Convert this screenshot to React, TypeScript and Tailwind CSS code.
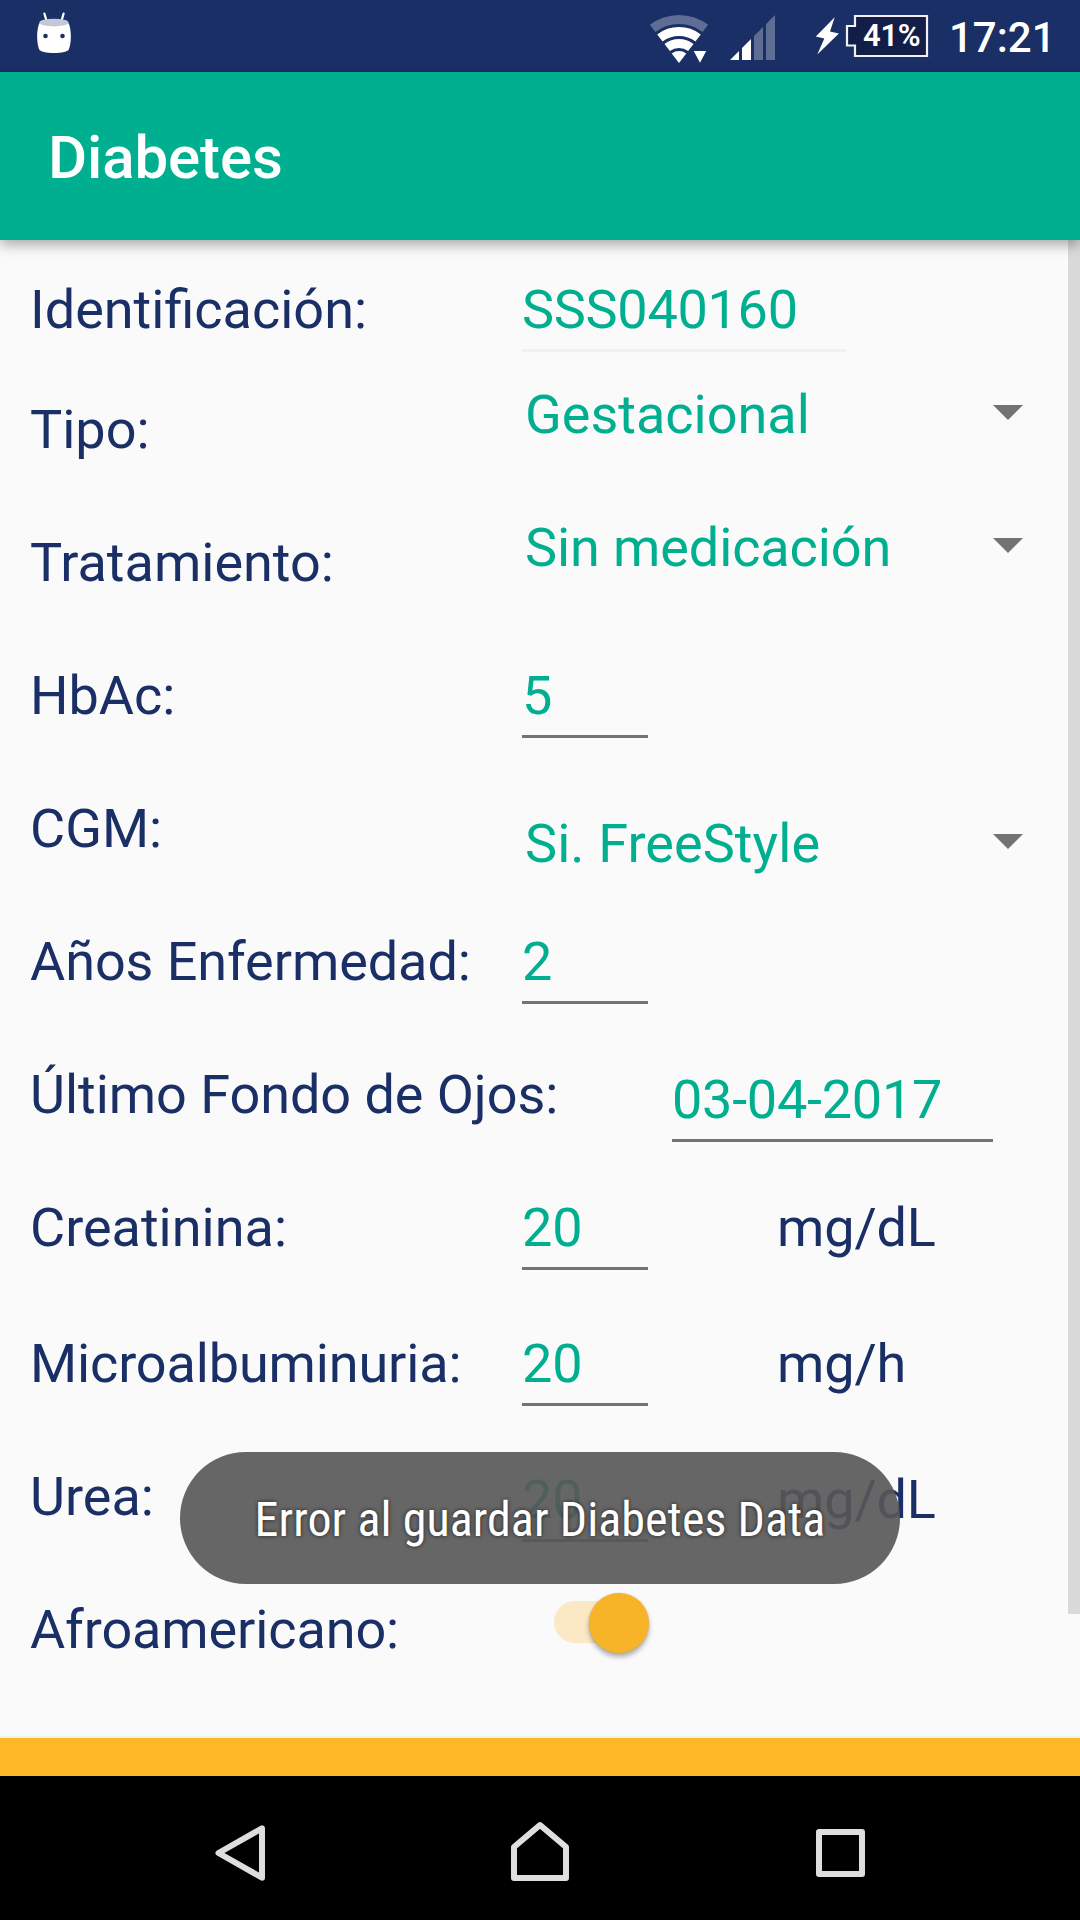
import React from "react";

type Row = {
  label: string;
  tracking?: string;
  height: string;
  control: React.ReactNode;
};

function Field({ value, className }: { value: string; className: string }) {
  return (
    <div className={`h-[74px] shrink-0 border-b-3 whitespace-nowrap text-[#00ae90] ${className}`}>
      {value}
    </div>
  );
}

function Spinner({ value, className }: { value: string; className: string }) {
  return (
    <div className={`ml-[3px] flex w-[498px] items-start justify-between text-[#00ae90] ${className}`}>
      <span className="whitespace-nowrap">{value}</span>
      <svg className="mt-[22px] h-[15px] w-[30px]" viewBox="0 0 30 15">
        <path d="M0 0H30L15 15Z" fill="#737373" />
      </svg>
    </div>
  );
}

function Measure({ unit, className }: { unit: string; className: string }) {
  return (
    <div className={`flex items-start ${className}`}>
      <Field value="20" className="w-[126px] border-[#737373]" />
      <span className="ml-[129px] tracking-[-0.15px] whitespace-nowrap text-[#1a2f66]">{unit}</span>
    </div>
  );
}

function Toggle() {
  return (
    <div className="relative mt-[3px] ml-8 h-[42px] w-[84px] rounded-full bg-[#fbe9c5]">
      <div className="absolute -top-[8px] left-[35px] h-[60px] w-[60px] rounded-full bg-[#f8b429] shadow-[0_4px_5px_rgba(0,0,0,0.3),0_0_2px_rgba(0,0,0,0.15)]" />
    </div>
  );
}

const rows: Row[] = [
  { label: "Identificación:", height: "h-[120px]", control: <Field value="SSS040160" className="w-[324px] border-[#f0f0f0] tracking-[-0.28px]" /> },
  { label: "Tipo:", height: "h-[133px]", control: <Spinner value="Gestacional" className="-mt-[15px]" /> },
  { label: "Tratamiento:", height: "h-[133px]", control: <Spinner value="Sin medicación" className="-mt-[15px] tracking-[-0.1px]" /> },
  { label: "HbAc:", height: "h-[133px]", control: <Field value="5" className="w-[126px] border-[#737373]" /> },
  { label: "CGM:", height: "h-[133px]", control: <Spinner value="Si. FreeStyle" className="mt-[15px] tracking-[0.08px]" /> },
  { label: "Años Enfermedad:", tracking: "tracking-[-0.08px]", height: "h-[133px]", control: <Field value="2" className="w-[126px] border-[#737373]" /> },
  { label: "Último Fondo de Ojos:", tracking: "tracking-[-0.05px]", height: "h-[133px]", control: <Field value="03-04-2017" className="mt-[5px] ml-[150px] w-[321px] border-[#737373] tracking-[-0.25px]" /> },
  { label: "Creatinina:", height: "h-[136px]", control: <Measure unit="mg/dL" className="" /> },
  { label: "Microalbuminuria:", tracking: "tracking-[-0.13px]", height: "h-[133px]", control: <Measure unit="mg/h" className="" /> },
  { label: "Urea:", height: "h-[133px]", control: <Measure unit="mg/dL" className="mt-[3px]" /> },
  { label: "Afroamericano:", tracking: "tracking-[-0.12px]", height: "h-[133px]", control: <Toggle /> },
];

function StatusBar() {
  return (
    <div className="flex h-[72px] shrink-0 items-start bg-[#1a2f66] font-medium text-white">
      <svg className="mt-3 ml-9 h-[42px] w-9" viewBox="36 12 36 42">
        <path d="M44.4 13.6 46.6 21M63.6 13.6 61.5 21" stroke="#fff" strokeWidth="2.2" strokeLinecap="round" />
        <path d="M39 24C41 17.500 67 17.500 69 24C71.500 31 71.500 42 69 49C68 54.300 40 54.300 39 49C36.500 42 36.500 31 39 24Z" fill="#fff" />
        <ellipse cx="54" cy="22.600" rx="14.600" ry="3.900" fill="#c3c8d7" />
        <circle cx="45.500" cy="36" r="2.300" fill="#1a2f66" />
        <circle cx="62.500" cy="36" r="2.300" fill="#1a2f66" />
      </svg>
      <svg className="mt-3 ml-[576px] h-[54px] w-[62px]" viewBox="648 12 62 54">
        <path d="M649.9 24.800A48 48 0 0 1 708.1 24.800L702.600 32A39 39 0 0 0 655.400 32Z" fill="#5f6d94" />
        <g fill="#fff">
          <path d="M657.200 34.400A36 36 0 0 1 700.800 34.400L695.400 41.500A27 27 0 0 0 662.600 41.500Z" />
          <path d="M664.500 43.900A24 24 0 0 1 693.500 43.900L688.100 51.100A15 15 0 0 0 669.900 51.100Z" />
          <path d="M671.700 53.500A12 12 0 0 1 686.300 53.500L679 63Z" />
          <path d="M693.700 51H706.200L700 62.700Z" />
        </g>
      </svg>
      <svg className="mt-3 ml-[18px] h-[50px] w-12" viewBox="728 12 48 50">
        <path d="M730 60L739 51V60ZM742 60V48L751 39V60Z" fill="#fff" />
        <path d="M754 60V36L763 27V60ZM766 60V24L775 15V60Z" fill="#5f6d94" />
      </svg>
      <svg className="mt-4 ml-[38px] h-10 w-[26px]" viewBox="814 16 26 40">
        <path d="M834.700 17.300L815.800 36.600L824.300 38.500L817.300 54.500L838.900 33.500L830 31.600Z" fill="#fff" />
      </svg>
      <div className="relative mt-[14px] ml-[5px] h-11 w-[84px]">
        <svg className="h-11 w-[84px]" viewBox="845 14 84 44">
          <path d="M855 16H927V56H855V45.500H847V26H855Z" fill="#121e47" stroke="#f2f0f5" strokeWidth="2.2" />
        </svg>
        <span className="absolute top-1 left-[18px] text-[31px] leading-[36px] font-semibold tracking-[-0.3px]">41%</span>
      </div>
      <span className="mt-[13px] ml-[20px] text-[42px] leading-[49px]">17:21</span>
    </div>
  );
}

function NavBar() {
  return (
    <div className="flex h-[144px] shrink-0 items-start bg-black">
      <svg className="mt-[46px] ml-[213px] h-[62px] w-[54px]" viewBox="213 1822 54 62" fill="none" stroke="#dedede" strokeWidth="6" strokeLinejoin="round">
        <path d="M218.500 1853L262 1828.300V1877.700Z" />
      </svg>
      <svg className="mt-11 ml-[242px] h-[64px] w-[62px]" viewBox="509 1820 62 64" fill="none" stroke="#dedede" strokeWidth="6" strokeLinejoin="round">
        <path d="M514 1878V1847L540 1825L566 1847V1878Z" />
      </svg>
      <div className="mt-[53px] ml-[245px] h-12 w-[49px] rounded-[3px] border-6 border-[#dedede]" />
    </div>
  );
}

export default function App() {
  return (
    <div className="relative flex h-[1920px] w-[1080px] flex-col overflow-hidden bg-[#fafafa] font-[Roboto,sans-serif]">
      <StatusBar />
      <header className="relative z-10 h-[168px] shrink-0 bg-[#00ae90] pt-[51px] pl-12 text-[60px] leading-[70px] font-medium tracking-[-0.12px] text-white shadow-[0_5px_12px_rgba(0,0,0,0.32)]">
        Diabetes
      </header>
      <main className="flex h-[1496px] shrink-0 items-start">
        <div className="flex w-[1068px] flex-col pt-[38px] text-[54px] leading-[63px]">
          {rows.map((row) => (
            <div key={row.label} className={`flex items-start ${row.height}`}>
              <div className={`w-[522px] shrink-0 pl-[30px] whitespace-nowrap text-[#1a2f66] ${row.tracking ?? ""}`}>
                {row.label}
              </div>
              {row.control}
            </div>
          ))}
        </div>
        <div className="h-[1374px] w-3 bg-[#dadada]" />
      </main>
      <div className="h-[2px] shrink-0 bg-[#f2f2f2]" />
      <div className="h-[38px] shrink-0 bg-[#fdb827]" />
      <NavBar />
      <div className="absolute top-[1452px] left-[180px] z-20 flex h-[132px] w-[720px] justify-center rounded-full bg-[#575757]/91 pt-[40px]">
        <span className="font-['Roboto_Condensed',Roboto,sans-serif] text-[48px] leading-[56px] tracking-[0.07px] whitespace-nowrap text-white [font-stretch:75%] [text-shadow:0_0_4px_rgba(0,0,0,0.7)]">
          Error al guardar Diabetes Data
        </span>
      </div>
    </div>
  );
}
